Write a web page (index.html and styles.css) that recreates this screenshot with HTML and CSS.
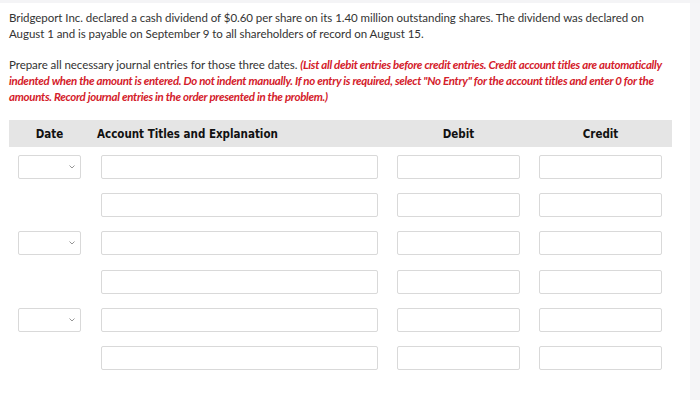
FILE: index.html
```html
<!DOCTYPE html>
<html>
<head>
<meta charset="utf-8">
<link rel="stylesheet" href="styles.css">
</head>
<body>
<div class="page">
  <div class="main">
    <p class="para">Bridgeport Inc. declared a cash dividend of $0.60 per share on its 1.40 million outstanding shares. The dividend was declared on August 1 and is payable on September 9 to all shareholders of record on August 15.</p>
    <p class="para">Prepare all necessary journal entries for those three dates. <span class="note">(List all debit entries before credit entries. Credit account titles are automatically indented when the amount is entered. Do not indent manually. If no entry is required, select "No Entry" for the account titles and enter 0 for the amounts. Record journal entries in the order presented in the problem.)</span></p>

    <div class="journal">
      <div class="head">
        <div class="c-date"><span class="h-date">Date</span></div>
        <div class="c-acct"><span class="h-acct">Account Titles and Explanation</span></div>
        <div class="c-amt"><span class="h-amt">Debit</span></div>
        <div class="c-amt2"><span class="h-amt">Credit</span></div>
      </div>

      <div class="row">
        <div class="c-date"><div class="sel"><svg class="chev" width="6" height="4" viewBox="0 0 6 4"><path d="M0.5 0.5 L3 3 L5.5 0.5" fill="none" stroke="#8a8a8a" stroke-width="0.9"/></svg></div></div>
        <div class="c-acct"><div class="box acct"></div></div>
        <div class="c-amt"><div class="box amt"></div></div>
        <div class="c-amt2"><div class="box amt"></div></div>
      </div>
      <div class="row">
        <div class="c-date"></div>
        <div class="c-acct"><div class="box acct"></div></div>
        <div class="c-amt"><div class="box amt"></div></div>
        <div class="c-amt2"><div class="box amt"></div></div>
      </div>
      <div class="row">
        <div class="c-date"><div class="sel"><svg class="chev" width="6" height="4" viewBox="0 0 6 4"><path d="M0.5 0.5 L3 3 L5.5 0.5" fill="none" stroke="#8a8a8a" stroke-width="0.9"/></svg></div></div>
        <div class="c-acct"><div class="box acct"></div></div>
        <div class="c-amt"><div class="box amt"></div></div>
        <div class="c-amt2"><div class="box amt"></div></div>
      </div>
      <div class="row">
        <div class="c-date"></div>
        <div class="c-acct"><div class="box acct"></div></div>
        <div class="c-amt"><div class="box amt"></div></div>
        <div class="c-amt2"><div class="box amt"></div></div>
      </div>
      <div class="row">
        <div class="c-date"><div class="sel"><svg class="chev" width="6" height="4" viewBox="0 0 6 4"><path d="M0.5 0.5 L3 3 L5.5 0.5" fill="none" stroke="#8a8a8a" stroke-width="0.9"/></svg></div></div>
        <div class="c-acct"><div class="box acct"></div></div>
        <div class="c-amt"><div class="box amt"></div></div>
        <div class="c-amt2"><div class="box amt"></div></div>
      </div>
      <div class="row">
        <div class="c-date"></div>
        <div class="c-acct"><div class="box acct"></div></div>
        <div class="c-amt"><div class="box amt"></div></div>
        <div class="c-amt2"><div class="box amt"></div></div>
      </div>
    </div>
  </div>
  <div class="side"></div>
</div>
</body>
</html>
```

FILE: styles.css
```css
html, body {
  margin: 0;
  padding: 0;
  background: #f4f4f6;
}
.page {
  display: flex;
  width: 700px;
  height: 400px;
  padding-top: 3px;
  box-sizing: border-box;
  background: #f4f4f6;
}
.main {
  width: 690px;
  height: 397px;
  background: #ffffff;
  padding: 7px 0 0 9px;
  box-sizing: border-box;
}
.side {
  flex: 1;
  background: #f5f5f7;
}
.para {
  margin: 0 0 15px 0;
  font-family: Lato, "Liberation Sans", sans-serif;
  font-size: 11.5px;
  letter-spacing: -0.05px;
  line-height: 16px;
  color: #333333;
  width: 670px;
}
.note {
  color: #d4202a;
  font-weight: bold;
  font-style: italic;
  letter-spacing: -0.3px;
}
.journal {
  width: 663px;
  margin-top: 4px;
  display: flex;
  flex-direction: column;
}
.head, .row {
  display: grid;
  grid-template-columns: 92px 296px 142px 133px;
}
.head {
  height: 27px;
  background: #e5e5e5;
  align-items: center;
  font-family: "DejaVu Sans Condensed", "DejaVu Sans", sans-serif;
  font-stretch: condensed;
  font-weight: bold;
  font-size: 11.5px;
  color: #111111;
  margin-bottom: 8px;
}
.row {
  height: 24px;
  margin-bottom: 14.2px;
}
.c-date {
  padding-left: 9px;
}
.h-date {
  display: block;
  width: 63px;
  text-align: center;
}
.h-acct {
  display: block;
  margin-left: -4px;
}
.h-amt {
  display: block;
  width: 123px;
  text-align: center;
}
.box, .sel {
  height: 24px;
  box-sizing: border-box;
  border: 1px solid #d9d9d9;
  border-radius: 2px;
  background: #ffffff;
}
.sel {
  width: 63px;
  display: flex;
  align-items: center;
  justify-content: flex-end;
  padding-right: 5px;
}
.acct {
  width: 277px;
}
.amt {
  width: 123px;
}
```
